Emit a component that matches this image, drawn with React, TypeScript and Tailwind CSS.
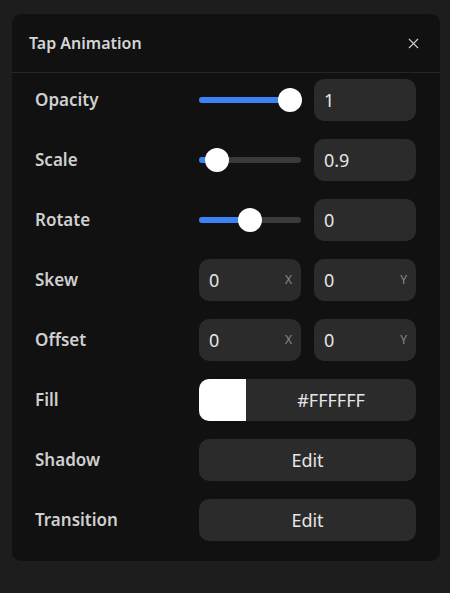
import { X } from "lucide-react";

function Slider({ pct }: { pct: number }) {
  return (
    <div className="relative h-[42px] flex items-center">
      <div className="relative w-full h-[6px] rounded-full bg-[#3a3a3a]">
        <div
          className="absolute left-0 top-0 h-full rounded-full bg-[#3b82f6]"
          style={{ width: `${pct}%` }}
        />
        <div
          className="absolute top-1/2 w-[24px] h-[24px] -translate-x-1/2 -translate-y-1/2 rounded-full bg-white"
          style={{ left: `${pct}%` }}
        />
      </div>
    </div>
  );
}

function Field({ value, suffix }: { value: string; suffix?: string }) {
  return (
    <div className="h-[42px] rounded-[10px] bg-[#2b2b2b] flex items-center justify-between pl-[10px] pr-[9px]">
      <span className="text-[18px] text-[#e6e6e6]">{value}</span>
      {suffix && <span className="text-[12px] text-[#8a8a8a]">{suffix}</span>}
    </div>
  );
}

function Row({ label, children }: { label: string; children: React.ReactNode }) {
  return (
    <div className="flex items-center h-[42px]">
      <div className="w-[164px] text-[17px] font-semibold text-[#cfcfcf]">{label}</div>
      <div className="w-[217px]">{children}</div>
    </div>
  );
}

export default function App() {
  return (
    <div
      className="min-h-[593px] bg-[#1d1d1d] pt-[13px] px-[11px]"
      style={{ fontFamily: '"Noto Sans", "Open Sans", sans-serif' }}
    >
      <div className="w-[430px] rounded-[10px] bg-[#111111] border border-[#1f1f1f]">
        <div className="h-[59px] flex items-center justify-between pl-[17px] pr-[18px] border-b border-[#262626]">
          <span className="text-[16px] font-semibold text-[#d4d4d4]">Tap Animation</span>
          <X size={17} strokeWidth={1.6} className="text-[#cfcfcf]" />
        </div>
        <div className="flex flex-col gap-[18px] pt-[6px] pb-[20px] pl-[23px]">
          <Row label="Opacity">
            <div className="grid grid-cols-2 gap-[13px]">
              <Slider pct={89} />
              <Field value="1" />
            </div>
          </Row>
          <Row label="Scale">
            <div className="grid grid-cols-2 gap-[13px]">
              <Slider pct={18} />
              <Field value="0.9" />
            </div>
          </Row>
          <Row label="Rotate">
            <div className="grid grid-cols-2 gap-[13px]">
              <Slider pct={50} />
              <Field value="0" />
            </div>
          </Row>
          <Row label="Skew">
            <div className="grid grid-cols-2 gap-[13px]">
              <Field value="0" suffix="X" />
              <Field value="0" suffix="Y" />
            </div>
          </Row>
          <Row label="Offset">
            <div className="grid grid-cols-2 gap-[13px]">
              <Field value="0" suffix="X" />
              <Field value="0" suffix="Y" />
            </div>
          </Row>
          <Row label="Fill">
            <div className="h-[42px] rounded-[10px] bg-[#2b2b2b] flex overflow-hidden">
              <div className="w-[47px] h-full bg-white" />
              <div className="flex-1 flex items-center justify-center text-[18px] text-[#e6e6e6]">
                #FFFFFF
              </div>
            </div>
          </Row>
          <Row label="Shadow">
            <button className="w-full h-[42px] rounded-[10px] bg-[#2b2b2b] text-[18px] text-[#e6e6e6]">
              Edit
            </button>
          </Row>
          <Row label="Transition">
            <button className="w-full h-[42px] rounded-[10px] bg-[#2b2b2b] text-[18px] text-[#e6e6e6]">
              Edit
            </button>
          </Row>
        </div>
      </div>
    </div>
  );
}
